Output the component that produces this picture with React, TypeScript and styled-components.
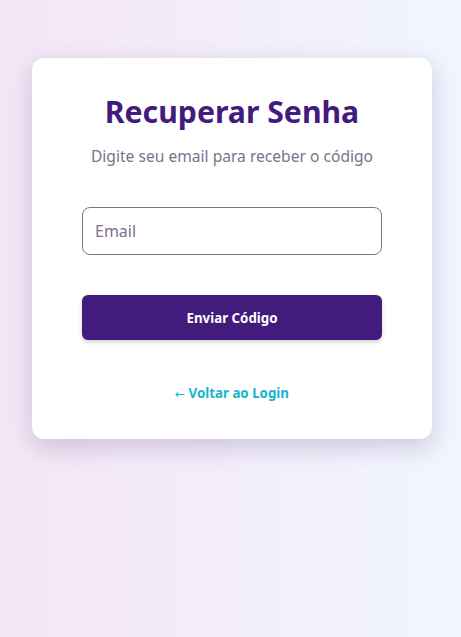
import React from "react";
import styled, { createGlobalStyle } from "styled-components";

const Global = createGlobalStyle`
  html, body { margin: 0; padding: 0; }
  body {
    font-family: "Noto Sans", "Open Sans", sans-serif;
    background: linear-gradient(to right, #f4e6f4, #f1f6fd);
    min-height: 637px;
  }
  * { box-sizing: border-box; }
`;

const Page = styled.div`
  display: flex;
  justify-content: center;
  align-items: flex-start;
  padding: 58px 0 0 3px;
  min-height: 637px;
`;

const Card = styled.div`
  width: 400px;
  background: #ffffff;
  border-radius: 12px;
  box-shadow: 0 8px 24px rgba(74, 40, 140, 0.22);
  padding: 34px 50px 35px;
  display: flex;
  flex-direction: column;
  align-items: stretch;
`;

const Title = styled.h1`
  margin: 0;
  text-align: center;
  font-size: 30.2px;
  line-height: 40px;
  font-weight: 700;
  color: #421b7c;
`;

const Subtitle = styled.p`
  margin: 13px 0 0;
  text-align: center;
  font-size: 15.6px;
  line-height: 22px;
  color: #7a7289;
`;

const Input = styled.input`
  margin-top: 40px;
  height: 48px;
  width: 100%;
  border: 1px solid #7d7390;
  border-radius: 8px;
  padding: 0 12px;
  font-family: inherit;
  font-size: 16px;
  color: #333;
  outline: none;
  &::placeholder { color: #7a7289; }
`;

const Button = styled.button`
  margin-top: 40px;
  height: 45px;
  width: 100%;
  border: none;
  border-radius: 6px;
  background: #421c7c;
  color: #ffffff;
  font-family: inherit;
  font-size: 13.3px;
  font-weight: 700;
  box-shadow: 0 2px 4px rgba(0, 0, 0, 0.2);
  cursor: pointer;
`;

const LinkRow = styled.div`
  margin-top: 42px;
  text-align: center;
  line-height: 20px;
`;

const BackLink = styled.a`
  color: #17b4cd;
  font-size: 13.3px;
  font-weight: 700;
  text-decoration: none;
  cursor: pointer;
`;

const Arrow = styled.span`
  font-family: "DejaVu Sans", sans-serif;
  font-weight: 400;
  font-size: 12px;
`;

export default function App() {
  return (
    <>
      <Global />
      <Page>
        <Card>
          <Title>Recuperar Senha</Title>
          <Subtitle>Digite seu email para receber o código</Subtitle>
          <Input type="email" placeholder="Email" />
          <Button>Enviar Código</Button>
          <LinkRow>
            <BackLink>
              <Arrow>←</Arrow> Voltar ao Login
            </BackLink>
          </LinkRow>
        </Card>
      </Page>
    </>
  );
}
